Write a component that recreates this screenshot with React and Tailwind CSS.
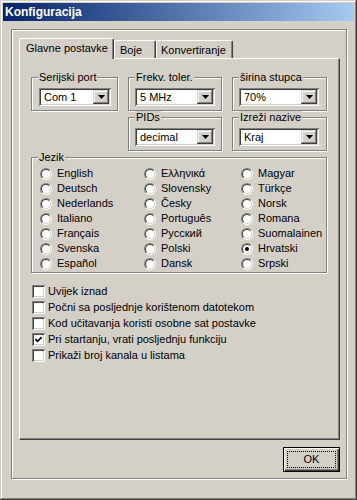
import React from "react";

const raised =
  "shadow-[inset_-1px_-1px_#404040,inset_1px_1px_#d4d0c8,inset_-2px_-2px_#808080,inset_2px_2px_#ffffff]";
const sunken =
  "shadow-[inset_1px_1px_#808080,inset_-1px_-1px_#ffffff,inset_2px_2px_#404040,inset_-2px_-2px_#d4d0c8]";
const etched = "border border-[#808080] shadow-[inset_1px_1px_#ffffff,1px_1px_#ffffff]";

function Select({ value, className }) {
  return (
    <div className={`flex h-[18px] p-[2px] bg-white ${sunken} ${className}`}>
      <div className="flex-1 pl-[3px] leading-[14px]">{value}</div>
      <div className={`w-[16px] h-[14px] bg-[#d4d0c8] flex items-center justify-center ${raised}`}>
        <svg width="7" height="4" viewBox="0 0 7 4">
          <polygon points="0,0 7,0 3.5,4" fill="#000" />
        </svg>
      </div>
    </div>
  );
}

function Group({ label, className, children }) {
  return (
    <div className={`relative ${etched} ${className}`}>
      <span className="absolute -top-[7px] left-[6px] px-[1px] bg-[#d4d0c8] leading-[13px]">
        {label}
      </span>
      {children}
    </div>
  );
}

function Radio({ label, checked }) {
  return (
    <div className="flex items-center gap-[5px] h-[15px]">
      <div className="w-[12px] h-[12px] shrink-0 rounded-full border border-t-[#808080] border-l-[#808080] border-r-white border-b-white">
        <div className="w-full h-full rounded-full border border-t-[#404040] border-l-[#404040] border-r-[#d4d0c8] border-b-[#d4d0c8] bg-white flex items-center justify-center">
          {checked && <div className="w-[4px] h-[4px] rounded-full bg-black" />}
        </div>
      </div>
      <span className="leading-[13px]">{label}</span>
    </div>
  );
}

function Check({ label, checked }) {
  return (
    <div className="flex items-center gap-[3px] h-[16px]">
      <div className={`w-[13px] h-[13px] shrink-0 bg-white flex items-center justify-center ${sunken}`}>
        {checked && (
          <svg width="7" height="7" viewBox="0 0 7 7">
            <path d="M0.5 3.2 L2.6 5.3 L6.6 1.2" stroke="#000" strokeWidth="1.7" fill="none" />
          </svg>
        )}
      </div>
      <span className="leading-[13px]">{label}</span>
    </div>
  );
}

const col1 = ["English", "Deutsch", "Nederlands", "Italiano", "Français", "Svenska", "Español"];
const col2 = ["Ελληνικά", "Slovensky", "Česky", "Português", "Русский", "Polski", "Dansk"];
const col3 = ["Magyar", "Türkçe", "Norsk", "Romana", "Suomalainen", "Hrvatski", "Srpski"];

export default function App() {
  return (
    <div
      className={`w-[357px] h-[500px] bg-[#d4d0c8] p-[3px] text-[11px] text-black font-['Liberation_Sans',Arial,sans-serif] ${raised}`}
    >
      {/* Title bar */}
      <div className="h-[18px] bg-linear-to-r from-[#0a246a] to-[#a6caf0] flex items-center pl-[2px] text-white font-bold text-[12px]">
        Konfiguracija
      </div>

      {/* Outer frame */}
      <div className={`mt-[8px] ml-[8px] w-[336px] h-[450px] pl-[7px] pt-[8px] ${etched}`}>
        {/* Tabs */}
        <div className="flex items-end h-[20px]">
          <div className="relative z-10 -mb-px h-[21px] w-[95px] bg-[#d4d0c8] border-t border-l border-r border-white border-r-[#404040] shadow-[inset_-1px_0_#808080] rounded-t-[2px] pl-[6px] pt-[3px] leading-[13px]">
            Glavne postavke
          </div>
          <div className="h-[18px] w-[42px] border-t border-l border-r border-white border-r-[#404040] shadow-[inset_-1px_0_#808080] rounded-t-[2px] pl-[5px] pt-[3px] leading-[13px]">
            Boje
          </div>
          <div className="h-[18px] w-[77px] border-t border-l border-r border-white border-r-[#404040] shadow-[inset_-1px_0_#808080] rounded-t-[2px] pl-[4px] pt-[3px] leading-[13px]">
            Konvertiranje
          </div>
        </div>

        {/* Tab page */}
        <div className="w-[321px] h-[382px] border border-white border-r-[#404040] border-b-[#404040] shadow-[inset_-1px_-1px_#808080] pl-[11px] pt-[18px]">
          <div className="flex gap-[10px]">
            <Group label="Serijski port" className="w-[87px] h-[34px] pt-[10px] pl-[7px]">
              <Select value="Com 1" className="w-[72px]" />
            </Group>
            <Group label="Frekv. toler." className="w-[94px] h-[34px] pt-[10px] pl-[6px]">
              <Select value="5 MHz" className="w-[80px]" />
            </Group>
            <Group label="širina stupca" className="w-[95px] h-[34px] pt-[10px] pl-[6px]">
              <Select value="70%" className="w-[80px]" />
            </Group>
          </div>

          <div className="flex gap-[10px] mt-[6px] ml-[97px]">
            <Group label="PIDs" className="w-[94px] h-[34px] pt-[10px] pl-[6px]">
              <Select value="decimal" className="w-[80px]" />
            </Group>
            <Group label="Izreži nazive" className="w-[95px] h-[34px] pt-[10px] pl-[6px]">
              <Select value="Kraj" className="w-[80px]" />
            </Group>
          </div>

          <Group label="Jezik" className="mt-[6px] w-[296px] h-[116px] pt-[8px] pl-[8px]">
            <div className="flex">
              <div className="w-[104px] flex flex-col">
                {col1.map((l) => (
                  <Radio key={l} label={l} />
                ))}
              </div>
              <div className="w-[97px] flex flex-col">
                {col2.map((l) => (
                  <Radio key={l} label={l} />
                ))}
              </div>
              <div className="flex-1 flex flex-col">
                {col3.map((l) => (
                  <Radio key={l} label={l} checked={l === "Hrvatski"} />
                ))}
              </div>
            </div>
          </Group>

          <div className="mt-[10px] pl-[1px] flex flex-col">
            <Check label="Uvijek iznad" />
            <Check label="Počni sa posljednje korištenom datotekom" />
            <Check label="Kod učitavanja koristi osobne sat postavke" />
            <Check label="Pri startanju, vrati posljednju funkciju" checked />
            <Check label="Prikaži broj kanala u listama" />
          </div>
        </div>

        {/* OK button */}
        <div className="w-[321px] mt-[7px] flex justify-end">
          <button className="w-[57px] h-[25px] border border-black bg-[#d4d0c8] p-[3px] shadow-[inset_1px_1px_#ffffff,inset_-1px_-1px_#404040,inset_-2px_-2px_#808080]">
            <div className="w-full h-full border border-dotted border-black flex items-center justify-center leading-[13px]">
              OK
            </div>
          </button>
        </div>
      </div>
    </div>
  );
}
